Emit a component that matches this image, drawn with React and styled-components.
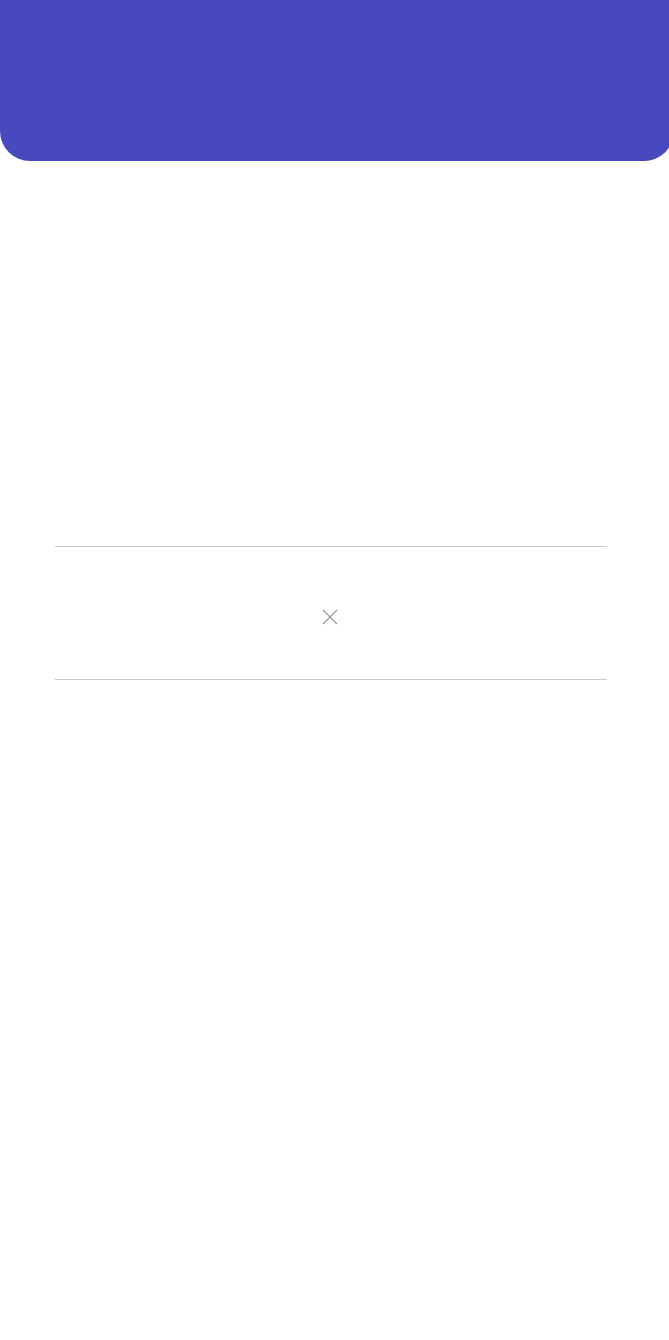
import React from 'react';
import styled, { createGlobalStyle } from 'styled-components';

const GlobalStyle = createGlobalStyle`
  html, body {
    margin: 0;
    padding: 0;
    background: #ffffff;
    font-family: Roboto, "Liberation Sans", sans-serif;
  }
`;

const Page = styled.div`
  min-height: 1340px;
  background: #ffffff;
  display: flex;
  flex-direction: column;
  overflow: hidden;
`;

// the banner runs a few px past the right edge, so its right corner is cut
const Header = styled.header`
  width: calc(100% + 5px);
  flex-shrink: 0;
  height: 161px;
  background: #4849be;
  border-radius: 0 0 30px 30px;
`;

const Body = styled.main`
  padding: 385px 62px 0 55px;
`;

const EmptyPanel = styled.section`
  height: 132px;
  border-top: 1px solid #cbcbcb;
  border-bottom: 1px solid #cbcbcb;
  display: flex;
  align-items: center;
  justify-content: center;
  padding: 8px 2px 0 0;
  box-sizing: border-box;
  height: 134px;
`;

const CloseButton = styled.button`
  appearance: none;
  border: 0;
  background: none;
  padding: 0;
  width: 16px;
  height: 16px;
  color: #9a9a9a;
  display: flex;
  cursor: pointer;
`;

const App = () => (
  <>
    <GlobalStyle />
    <Page>
      <Header />
      <Body>
        <EmptyPanel>
          <CloseButton aria-label="close">
            <svg width="16" height="16" viewBox="0 0 16 16" fill="none">
              <path d="M1 1L15 15M15 1L1 15" stroke="currentColor" strokeWidth="1.3" />
            </svg>
          </CloseButton>
        </EmptyPanel>
      </Body>
    </Page>
  </>
);

export default App;
